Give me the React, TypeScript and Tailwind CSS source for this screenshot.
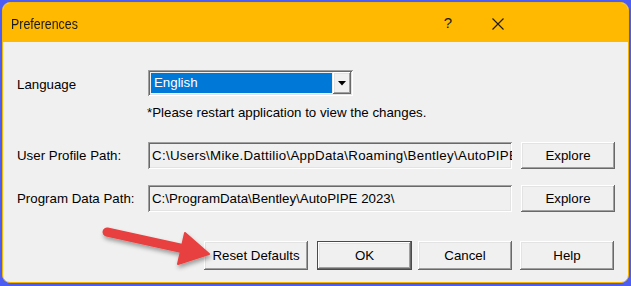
import React from "react";

const raised =
  "shadow-[inset_-1px_-1px_#696969,inset_1px_1px_#ffffff,inset_-2px_-2px_#a0a0a0,inset_2px_2px_#e3e3e3]";
const sunken =
  "shadow-[inset_1px_1px_#a0a0a0,inset_-1px_-1px_#ffffff,inset_2px_2px_#696969,inset_-2px_-2px_#e3e3e3]";

function Btn({ label, w, def }: { label: string; w: string; def?: boolean }) {
  return (
    <div
      className={`${w} h-full flex items-center justify-center bg-[#f0f0f0] text-[13.3px] text-black ${
        def ? "border border-[#4a4a4a]" : ""
      } ${raised}`}
    >
      {label}
    </div>
  );
}

export default function App() {
  return (
    <div
      className="w-[631px] h-[286px] bg-[#4b5df3] pt-[2px] pl-[2px] pr-[2px] pb-[3px] overflow-hidden"
      style={{ fontFamily: '"Liberation Sans", Arial, sans-serif' }}
    >
      <div className="relative w-full h-full rounded-[8px] border border-[#f7b500] bg-[#f0f0f0] overflow-hidden flex flex-col">
        {/* title bar */}
        <div className="h-[39px] bg-[#ffb900] flex items-center shrink-0">
          <span className="ml-[8px] mt-[2px] inline-block origin-left scale-x-[0.8] text-[15.5px] text-[#1a1a1a] whitespace-nowrap">
            Preferences
          </span>
          <span className="ml-auto mt-[2px] text-[15px] text-[#1a1a1a] mr-[40px]">?</span>
          <svg width="12" height="12" viewBox="0 0 12 12" className="mr-[124px] mt-[2px]">
            <path d="M0.5 0.5 L11.5 11.5 M11.5 0.5 L0.5 11.5" stroke="#1a1a1a" strokeWidth="1.1" />
          </svg>
        </div>

        {/* body */}
        <div className="flex flex-col pl-[14px] pt-[28px] text-[13.3px] text-black">
          {/* language row */}
          <div className="flex items-center h-[26px]">
            <div className="w-[131px] mt-[3px]">Language</div>
            <div className={`w-[205px] h-full bg-[#f0f0f0] ${sunken} p-[2px] flex`}>
              <div className="flex-1 bg-[#0078d7] text-white flex items-center pl-[3px] border border-[#f0f0f0]">
                English
              </div>
              <div className={`w-[18px] bg-[#f0f0f0] ${raised} flex items-center justify-center`}>
                <svg width="8" height="5" viewBox="0 0 8 5">
                  <path d="M0 0 H8 L4 4.5 Z" fill="#000" />
                </svg>
              </div>
            </div>
          </div>
          <div className="ml-[130px] mt-[9px] leading-[15px]">
            *Please restart application to view the changes.
          </div>

          {/* user profile row */}
          <div className="flex items-center h-[27px] mt-[22px]">
            <div className="w-[131px]">User Profile Path:</div>
            <div className={`w-[364px] h-full ${sunken} flex items-center pl-[4px] pr-[3px] overflow-hidden whitespace-nowrap tracking-[0.3px]`}>
              C:\Users\Mike.Dattilio\AppData\Roaming\Bentley\AutoPIPE 2023\
            </div>
            <div className="ml-[9px] h-[27px]">
              <Btn label="Explore" w="w-[94px]" />
            </div>
          </div>

          {/* program data row */}
          <div className="flex items-center h-[27px] mt-[16px]">
            <div className="w-[131px]">Program Data Path:</div>
            <div className={`w-[364px] h-full ${sunken} flex items-center pl-[4px] overflow-hidden whitespace-nowrap`}>
              C:\ProgramData\Bentley\AutoPIPE 2023\
            </div>
            <div className="ml-[9px] h-[27px]">
              <Btn label="Explore" w="w-[94px]" />
            </div>
          </div>

          {/* buttons */}
          <div className="flex h-[29px] mt-[29px] ml-[187px]">
            <Btn label="Reset Defaults" w="w-[104px]" />
            <div className="ml-[9px] h-full">
              <Btn label="OK" w="w-[95px]" def />
            </div>
            <div className="ml-[6px] h-full">
              <Btn label="Cancel" w="w-[94px]" />
            </div>
            <div className="ml-[8px] h-full">
              <Btn label="Help" w="w-[94px]" />
            </div>
          </div>
        </div>

        {/* red arrow annotation */}
        <svg
          className="absolute left-0 top-0 pointer-events-none"
          width="627"
          height="281"
          viewBox="0 0 627 281"
        >
          <defs>
            <filter id="sh" x="-20%" y="-20%" width="140%" height="160%">
              <feDropShadow dx="1" dy="3" stdDeviation="2" floodColor="#000" floodOpacity="0.35" />
            </filter>
          </defs>
          <g filter="url(#sh)" transform="translate(-2,-2)">
            <path d="M106 231 L188 249" stroke="#e8403f" strokeWidth="9" strokeLinecap="round" />
            <path d="M184 232 L208 253 L177 263 Z" fill="#e8403f" stroke="#e8403f" strokeWidth="2" strokeLinejoin="round" />
          </g>
        </svg>
      </div>
    </div>
  );
}
